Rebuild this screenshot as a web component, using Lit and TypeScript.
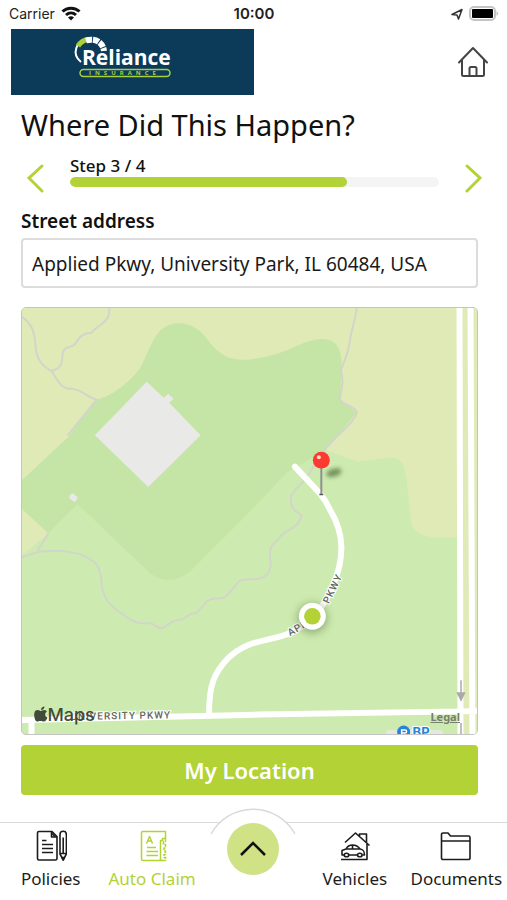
import { LitElement, html, css, svg } from "lit";
import { customElement, property, state } from "lit/decorators.js";
import { classMap } from "lit/directives/class-map.js";

const icons: Record<string, unknown> = {
  policies: svg`<g fill="none" stroke="currentColor" stroke-width="1.6" stroke-linejoin="round">
    <path d="M4 1.500H17L22 6.500V28.500a1.500 1.500 0 0 1-1.500 1.500H4A1.500 1.500 0 0 1 2.500 28.500V3A1.500 1.500 0 0 1 4 1.500Z"/>
    <path d="M16.500 1.500V7H22M17 3.500L20 6.500"/>
    <path d="M7 10.500h4.500M7 14.500h11M7 18.500h11M7 22.500h11"/>
    <path d="M25 4.500a3.200 3.200 0 0 1 6.400 0V24L28.200 30L25 24ZM25 23.500h6.400M28.200 7.500V23"/>
    <path d="M27 27.500h2.400L28.200 30Z" fill="currentColor"/></g>`,
  claim: svg`<g fill="none" stroke="currentColor" stroke-width="1.500" stroke-linejoin="round">
    <path d="M27 30.500H7a1.500 1.500 0 0 1-1.500-1.500V3A1.500 1.500 0 0 1 7 1.500H29.500V8.500H26.500V10.500H24.500V30.500"/>
    <path d="M29.500 8.500V11.500H27.500V14.500H29.500V18H28V21H29.500V24.500H28V27.500H29.500V30.500H26" stroke-dasharray="3.500 1"/>
    <path d="M10.500 13.500L13.500 6.500L16.500 13.500M11.700 11h3.800"/>
    <path d="M11 17.500h9M10.500 21.500h11.500M10.500 25.500h11.500"/></g>`,
  vehicles: svg`<g fill="none" stroke="currentColor" stroke-width="1.600" stroke-linejoin="round">
    <path d="M6 12.500L16.500 3L30.500 15.500M20.500 6V4h7V12.500M28 13V29.500H2"/>
    <path d="M5 25H3v-4.500l4-1.500C8.500 16 10 15 13.500 15s5.500 1 7.500 4c3 .5 4.500 1.500 4.500 6H23.500M10 25h8M7 19H21.500M13.500 15V19"/>
    <ellipse cx="7.500" cy="25" rx="2.300" ry="1.800"/><ellipse cx="20.800" cy="25" rx="2.300" ry="1.800"/></g>`,
  documents: svg`<g fill="none" stroke="currentColor" stroke-width="1.600" stroke-linejoin="round">
    <path d="M1.500 11V4.500A1.500 1.500 0 0 1 3 3H8L10.500 6H28.500A1.500 1.500 0 0 1 30 7.500V28A1.500 1.500 0 0 1 28.500 29.500H3A1.500 1.500 0 0 1 1.500 28V11H30"/></g>`,
};

@customElement("nav-item")
class NavItem extends LitElement {
  @property() label = "";
  @property() icon = "";
  @property({ type: Boolean }) current = false;

  static styles = css`
    :host { display: block; min-width: 0; }
    .item {
      display: flex; flex-direction: column; align-items: center; gap: 4px;
      padding-top: 7px; color: #1c1c1c; text-decoration: none;
      font-size: 17px; line-height: 26px; white-space: nowrap;
    }
    .current { color: #b2d235; }
    .icon { width: 32px; height: 32px; }
  `;

  render() {
    return html`<a class=${classMap({ item: true, current: this.current })} href="#${this.icon}"
      aria-current=${this.current ? "page" : "false"}>
      <svg class="icon" viewBox="0 0 32 32" aria-hidden="true">${icons[this.icon]}</svg>
      <span>${this.label}</span>
    </a>`;
  }
}

@customElement("claim-map")
class ClaimMap extends LitElement {
  static styles = css`
    :host {
      display: block; position: relative; overflow: hidden;
      border: 1px solid #c4c4c4; border-radius: 5px; background: #cdebb0;
    }
    .canvas { position: absolute; inset: 0; width: 100%; height: 100%; }
    .trail { fill: none; stroke: #d3d4ca; stroke-width: 2; stroke-linejoin: round; }
    .road { fill: none; stroke: #fff; stroke-width: 6; stroke-linecap: round; stroke-linejoin: round; }
    .street { font: 500 10px "Roboto", sans-serif; fill: #62665d; stroke: #fff; stroke-width: 2; paint-order: stroke; letter-spacing: 1px; }
    .maps { font: 500 18px "Inter", sans-serif; fill: #414b39; }
    .poi { font: 700 13px "Inter", sans-serif; fill: #2583dc; stroke: #fff; stroke-width: 2; paint-order: stroke; }
    .legal {
      position: absolute; right: 17px; bottom: 10px;
      font: 700 11px/14px "Noto Sans", sans-serif; color: #777f6e;
    }
  `;

  render() {
    return html`
      <svg class="canvas" viewBox="21 308 457 427" preserveAspectRatio="xMidYMid slice" role="img" aria-label="Map of Applied Pkwy">
        <defs>
          <filter id="soft" x="-50%" y="-80%" width="200%" height="260%"><feGaussianBlur stdDeviation="2"/></filter>
          <filter id="glow" x="-50%" y="-50%" width="200%" height="200%"><feGaussianBlur stdDeviation="4"/></filter>
        </defs>
        <path fill="#e0eab6" d="M20 307H479V736H463V538H440C420 538 411 530 411 518L407 480C404 462 402 458 390 458L358 462L325 450L200 500L48 534L20 557Z"/>
        <path fill="#cdebb0" d="M77 505L48 534L60 560H200V500H100Z"/>
        <path fill="#c4e5a5" d="M20 482L68 437L95 400C110 398 130 382 140 368C150 350 154 328 172 324C187 321 200 328 210 343C222 357 232 361 250 359.500C292 354 300 340 322 339C339 339 342 352 342 368L340 400L357 413L325 451L287 473L250 512L190 572Q170 588 150 574L84 511L77 505L48 534L20 508Z"/>
        <path fill="#e9e9e8" d="M146.500 382L163.500 398L168 394L173.500 399L169 403L200.500 435.500L148 487.500L94.500 435.500Z"/>
        <rect fill="#e9e9e8" x="69" y="495" width="8" height="6" rx="2" transform="rotate(40 73 498)"/>
        <g class="trail">
          <path d="M20 316C30 322 34 330 35 346C36 361 43 367 51 371C59 384 61 389 72 389C84 391 84 396 96 400L67 436"/>
          <path d="M109 308C110 324 97 324 91 333C81 333 78 339 74 345C68 349 63 346 62 355C62 364 60 369 51 371"/>
          <path d="M357 308C355 325 351 330 350 342C348 355 346 358 341 370C345 383 341 390 340 399C343 406 351 404 357 412C357 421 338 434 326 449L305 480C299 488 291 491 291 500C291 512 298 512 302 516C297 532 283 530 279 539C268 548 269 553 271 566C269 578 261 580 250 580L240 581C229 592 227 601 216 599C202 600 203 611 195 614C187 614 185 621 178 621C170 621 168 627 162 629C154 629 153 622 147 624C136 625 131 621 124 616C107 606 101 595 101 580C99 563 93 561 80 555C65 550 53 551 40 552L20 558"/>
          <path d="M48 534L37 551"/>
        </g>
        <g class="road">
          <path d="M460 304L461 740M471 304L473 740M18 721L260 715.500L482 712M31 721V740"/>
          <path d="M209 714C209 686 214 674 227 660C247 640 266 643 287 635C305 628 322 612 333 587C344 560 346 536 330 510Q326 501 321 495L295 467"/>
        </g>
        <path d="M461.500 681V698M458 694L461.500 701L465 694Z" fill="#aaa" stroke="#aaa" stroke-width="1.500"/>
        <path d="M461.500 724V736" stroke="#aaa" stroke-width="1.500"/>
        <text class="street" transform="rotate(-1 70 721)" x="70" y="721">UNIVERSITY PKWY</text>
        <text class="street" transform="translate(290 637) rotate(-30)">APPL</text>
        <text class="street" transform="translate(329 605) rotate(-64)">PKWY</text>
        <circle cx="312.500" cy="619" r="15" fill="#55713f" opacity=".5" filter="url(#glow)"/>
        <circle cx="312.500" cy="617" r="13.500" fill="#fff"/>
        <circle cx="312.500" cy="617" r="8.300" fill="#b2d235"/>
        <ellipse cx="334" cy="473" rx="8" ry="4" transform="rotate(-16 334 473)" fill="#456332" opacity=".65" filter="url(#soft)"/>
        <path d="M321.500 468V495" stroke="#8e9190" stroke-width="2"/>
        <path d="M319.500 495h4" stroke="#56595c" stroke-width="1.500"/>
        <circle cx="321.500" cy="460.500" r="8.500" fill="#fb3b30"/>
        <circle cx="319" cy="457.500" r="2" fill="#ffd9d5"/>
        <path fill="#414b39" d="M40.500 711C40.500 709 42 707.500 44 707.500C44 709.500 42.500 711 40.500 711ZM40 712C41.500 712 42 711 43.500 711Q45.500 711 46.500 712.500C43.500 714.500 44.500 717.500 47 718.500C46 721 45 722.500 43.500 722.500C42 722.500 41.500 722 40 722S38 722.500 36.500 722.500C34 722.500 31.500 711 37 711Q38.500 711 40 712Z"/>
        <text class="maps" x="47" y="722">Maps</text>
        <rect x="386" y="731" width="58" height="8" rx="4" fill="#e3e9dc"/>
        <circle cx="404" cy="733" r="6.500" fill="#2583dc"/>
        <path d="M402 736V731H405.500a1.500 1.500 0 0 1 0 3H402" fill="none" stroke="#fff" stroke-width="1.500"/>
        <text class="poi" x="413" y="738">BP</text>
      </svg>
      <a class="legal" href="#legal">Legal</a>
    `;
  }
}

@customElement("app-root")
class AppRoot extends LitElement {
  @state() private address = "Applied Pkwy, University Park, IL 60484, USA";
  @state() private step = 3;
  private readonly steps = 4;

  static styles = css`
    :host {
      display: flex; flex-direction: column; min-height: 100vh; background: #fff;
      font-family: "Noto Sans", "Open Sans", sans-serif; color: #111;
    }
    * { box-sizing: border-box; }
    button { font: inherit; border: 0; padding: 0; background: none; cursor: pointer; }
    .status {
      display: grid; grid-template-columns: 1fr auto 1fr; align-items: center;
      height: 29px; padding: 0 8px 2px 9px; font: 14px/20px "Inter", sans-serif; color: #222;
    }
    .carrier, .power { display: flex; align-items: center; gap: 6px; }
    .power { justify-content: flex-end; }
    .time { font-weight: 600; font-size: 15px; }
    .brand { display: flex; align-items: center; justify-content: space-between; padding: 0 18px 0 11px; }
    .logo { display: block; width: 243px; height: 66px; background: #0c3b59; }
    .logo-name { font: 700 21px "Open Sans", sans-serif; fill: #fff; }
    .logo-sub { font: 700 6px "Open Sans", sans-serif; fill: #a9cf3d; letter-spacing: 4px; }
    .home { display: flex; color: #444; }
    main { flex: 1; display: flex; flex-direction: column; padding: 8px 29px 27px 21px; }
    h1 { margin: 0; font-size: 29px; line-height: 44px; font-weight: 400; white-space: nowrap; }
    .stepper { display: flex; align-items: flex-end; justify-content: space-between; gap: 26px; margin: 8px -4px 0 6px; }
    .arrow { display: flex; color: #b2d235; }
    .progress { flex: 1; padding-bottom: 6px; }
    .step { font-size: 17px; line-height: 22px; font-weight: 500; }
    .track { height: 10px; border-radius: 5px; background: #f4f4f4; overflow: hidden; }
    .fill { height: 100%; border-radius: 5px; background: #b2d235; }
    label { margin-top: 14px; font-size: 19px; line-height: 28px; font-weight: 600; }
    input {
      width: 100%; height: 50px; margin-top: 3px; padding: 2px 9px 0; border: 2px solid #dcdcdc; border-radius: 4px;
      font: 19px "Noto Sans", sans-serif; color: #1a1a1a; background: #fff;
    }
    claim-map { flex: 1; min-height: 300px; margin: 19px 0 10px; }
    .locate {
      height: 50px; border-radius: 4px; background: #b2d235; color: #fff;
      font-size: 22px; font-weight: 600;
    }
    nav {
      display: grid; grid-template-columns: repeat(5, 1fr); height: 78px;
      border-top: 1px solid #d9d9d9;
    }
    .center { position: relative; display: flex; justify-content: center; }
    .hump { position: absolute; top: -15px; }
    .up {
      position: relative; display: flex; align-items: center; justify-content: center;
      width: 52px; height: 52px; border-radius: 50%; background: #cfe285; color: #111;
    }
  `;

  private move(delta: number) {
    this.step = Math.min(this.steps, Math.max(1, this.step + delta));
  }

  render() {
    return html`
      <div class="status">
        <div class="carrier">Carrier
          <svg width="20" height="15" viewBox="0 0 20 15" fill="none" stroke="#111" stroke-width="3" aria-hidden="true">
            <path d="M1.500 5.500C6 1 14 1 18.500 5.500M5 9C8 6.300 12 6.300 15 9"/>
            <path d="M7 11.500Q10 9 13 11.500L10 14.500Z" fill="#111" stroke="none"/>
          </svg>
        </div>
        <div class="time">10:00</div>
        <div class="power">
          <svg width="12" height="12" viewBox="0 0 12 12" fill="none" stroke="#333" stroke-width="1.500" stroke-linejoin="round" aria-hidden="true">
            <path d="M1 6.500L11 1.500L7.500 11L6 7Z"/>
          </svg>
          <svg width="30" height="15" viewBox="0 0 30 15" aria-hidden="true">
            <rect x="1" y="1" width="25" height="13" rx="4" fill="#fff" stroke="#c4c4c4" stroke-width="2"/>
            <rect x="3" y="3" width="21" height="9" rx="1" fill="#000"/>
            <path d="M27.500 5Q31 7.500 27.500 10Z" fill="#c4c4c4"/>
          </svg>
        </div>
      </div>
      <header class="brand">
        <svg class="logo" viewBox="0 0 243 66" role="img" aria-label="Reliance Insurance">
          <path d="M70 33C60 25 65 11 78 9.500" fill="none" stroke="#fff" stroke-width="2"/>
          <path d="M67 17C70 12.500 73 11 77 10.500" fill="none" stroke="#a9cf3d" stroke-width="5"/>
          <path d="M75 11.500C85 8.500 92 14 93 22" fill="none" stroke="#fff" stroke-width="6" stroke-dasharray="6 1"/>
          <text class="logo-name" x="71" y="36">Reliance</text>
          <rect x="69" y="40.500" width="90" height="7" rx="3.500" fill="none" stroke="#a9cf3d" stroke-width="1.500"/>
          <text class="logo-sub" x="78" y="46">INSURANCE</text>
        </svg>
        <a class="home" href="#home" aria-label="Home">
          <svg width="32" height="32" viewBox="0 0 32 32" fill="none" stroke="currentColor" stroke-width="2" stroke-linejoin="round" stroke-linecap="round">
            <path d="M2 16.500L16 2L30 16.500M5 14V28.500Q5 30 6.500 30H25.500Q27 30 27 28.500V14"/>
            <path d="M12.500 30V22.500Q12.500 21 14 21H18Q19.500 21 19.500 22.500V30"/>
          </svg>
        </a>
      </header>
      <main>
        <h1>Where Did This Happen?</h1>
        <div class="stepper">
          <button class="arrow" aria-label="Previous step" @click=${() => this.move(-1)}>
            <svg width="17" height="30" viewBox="0 0 17 30" fill="none" stroke="currentColor" stroke-width="3" stroke-linecap="round"><path d="M15 3L2 15L15 28"/></svg>
          </button>
          <div class="progress">
            <div class="step">Step ${this.step} / ${this.steps}</div>
            <div class="track"><div class="fill" style="width:${(this.step / this.steps) * 100}%"></div></div>
          </div>
          <button class="arrow" aria-label="Next step" @click=${() => this.move(1)}>
            <svg width="17" height="30" viewBox="0 0 17 30" fill="none" stroke="currentColor" stroke-width="3" stroke-linecap="round"><path d="M2 3L15 15L2 28"/></svg>
          </button>
        </div>
        <label for="address">Street address</label>
        <input id="address" type="text" .value=${this.address}
          @input=${(e: Event) => (this.address = (e.target as HTMLInputElement).value)} />
        <claim-map></claim-map>
        <button class="locate">My Location</button>
      </main>
      <nav>
        <nav-item label="Policies" icon="policies"></nav-item>
        <nav-item label="Auto Claim" icon="claim" current></nav-item>
        <div class="center">
          <svg class="hump" width="86" height="27" viewBox="0 0 86 27" aria-hidden="true">
            <path d="M1 26A48 48 0 0 1 85 26" fill="#fff" stroke="#d9d9d9" stroke-width="1.500"/>
          </svg>
          <button class="up" aria-label="Open menu">
            <svg width="26" height="16" viewBox="0 0 26 16" fill="none" stroke="currentColor" stroke-width="2.500"><path d="M1 14L13 2L25 14"/></svg>
          </button>
        </div>
        <nav-item label="Vehicles" icon="vehicles"></nav-item>
        <nav-item label="Documents" icon="documents"></nav-item>
      </nav>
    `;
  }
}
